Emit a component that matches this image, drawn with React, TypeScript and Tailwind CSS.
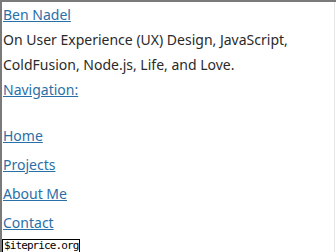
export default function App() {
  const links = ["Home", "Projects", "About Me", "Contact"];
  return (
    <div
      className="relative h-[252px] w-[336px] overflow-hidden border-l-2 border-t-2 border-[#7a7a7a] bg-white pl-[1px] text-[14px] text-[#2a2a2a]"
      style={{ fontFamily: '"Noto Sans", sans-serif' }}
    >
      <div className="mr-[1px] h-full border-r border-[#e6e6e6] pt-0">
        <a href="#" className="block leading-[25px] text-[#2a70a8] underline">
          Ben Nadel
        </a>
        <p className="leading-[25px]">
          On User Experience (UX) Design, JavaScript,
          <br />
          ColdFusion, Node.js, Life, and Love.
        </p>
        <a href="#" className="block leading-[25px] text-[#2a70a8] underline">
          Navigation:
        </a>
        <ul className="mt-[21px] flex flex-col gap-[4px]">
          {links.map((l) => (
            <li key={l} className="leading-[25px]">
              <a href="#" className="text-[#2a70a8] underline">
                {l}
              </a>
            </li>
          ))}
        </ul>
      </div>
      <div
        className="absolute bottom-[-1px] left-0 border border-black bg-white px-[1px] text-[11px] leading-[12px] tracking-[-0.9px] text-black"
        style={{ fontFamily: '"DejaVu Sans Mono", monospace' }}
      >
        $iteprice.org
      </div>
    </div>
  );
}
